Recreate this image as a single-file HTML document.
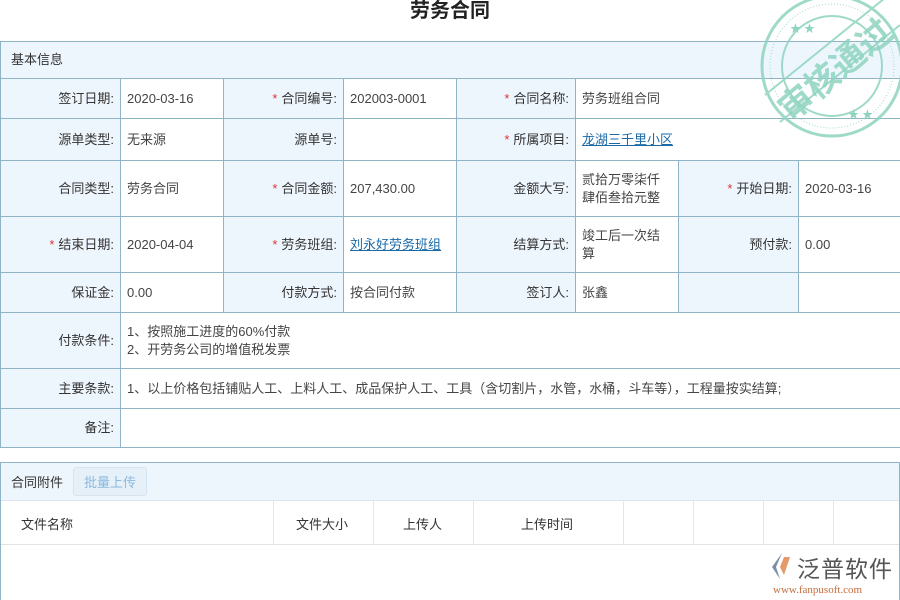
<!DOCTYPE html><html><head><meta charset="utf-8"><style>
*{margin:0;padding:0;box-sizing:border-box}
body{width:900px;height:600px;overflow:hidden;background:#fff;font-family:"Liberation Sans","Noto Sans CJK SC",sans-serif;font-size:13px;color:#333;position:relative}
h1{position:absolute;top:0;left:0;width:900px;text-align:center;font-size:20px;font-weight:bold;line-height:22px;color:#222}
table{border-collapse:collapse;table-layout:fixed;position:absolute;left:0;width:901px}
td{border:1px solid #8fb4c8;padding:0 6px;vertical-align:middle;line-height:18px}
.l{background:#eef6fd;text-align:right;padding-right:6px}
.v{background:#fff;color:#444}
.s{color:#d33;margin-right:4px}
a{color:#1a6aa8;text-decoration:underline}
.hd{background:#eef6fd;padding-left:10px}
</style></head><body>
<h1>劳务合同</h1>
<table style="top:41px">
<colgroup><col style="width:120px"><col style="width:103px"><col style="width:120px"><col style="width:113px"><col style="width:119px"><col style="width:103px"><col style="width:120px"><col style="width:102px"></colgroup>
<tr style="height:37px"><td colspan="8" class="hd">基本信息</td></tr>
<tr style="height:40px"><td class="l">签订日期:</td><td class="v">2020-03-16</td><td class="l"><span class="s">*</span>合同编号:</td><td class="v">202003-0001</td><td class="l"><span class="s">*</span>合同名称:</td><td class="v" colspan="3">劳务班组合同</td></tr>
<tr style="height:42px"><td class="l">源单类型:</td><td class="v">无来源</td><td class="l">源单号:</td><td class="v"></td><td class="l"><span class="s">*</span>所属项目:</td><td class="v" colspan="3"><a>龙湖三千里小区</a></td></tr>
<tr style="height:56px"><td class="l">合同类型:</td><td class="v">劳务合同</td><td class="l"><span class="s">*</span>合同金额:</td><td class="v">207,430.00</td><td class="l">金额大写:</td><td class="v">贰拾万零柒仟肆佰叁拾元整</td><td class="l"><span class="s">*</span>开始日期:</td><td class="v">2020-03-16</td></tr>
<tr style="height:56px"><td class="l"><span class="s">*</span>结束日期:</td><td class="v">2020-04-04</td><td class="l"><span class="s">*</span>劳务班组:</td><td class="v"><a>刘永好劳务班组</a></td><td class="l">结算方式:</td><td class="v">竣工后一次结算</td><td class="l">预付款:</td><td class="v">0.00</td></tr>
<tr style="height:40px"><td class="l">保证金:</td><td class="v">0.00</td><td class="l">付款方式:</td><td class="v">按合同付款</td><td class="l">签订人:</td><td class="v">张鑫</td><td class="l"></td><td class="v"></td></tr>
<tr style="height:56px"><td class="l">付款条件:</td><td class="v" colspan="7">1、按照施工进度的60%付款<br>2、开劳务公司的增值税发票</td></tr>
<tr style="height:40px"><td class="l">主要条款:</td><td class="v" colspan="7">1、以上价格包括铺贴人工、上料人工、成品保护人工、工具（含切割片，水管，水桶，斗车等），工程量按实结算;</td></tr>
<tr style="height:39px"><td class="l">备注:</td><td class="v" colspan="7"></td></tr>
</table>
<div style="position:absolute;top:462px;left:0;width:900px;height:138px;border:1px solid #8fb4c8;border-bottom:none">
<div style="height:38px;background:#eef6fd;border-bottom:1px solid #dde6ee;display:flex;align-items:center;padding-left:10px">合同附件<span style="margin-left:10px;padding:4px 10px;border:1px solid #d6e4f0;border-radius:3px;background:#e6f0f9;color:#8ab9df">批量上传</span></div>
<div style="height:44px;border-bottom:1px solid #e3e3e3;position:relative;color:#333">
<span style="position:absolute;left:20px;top:13px">文件名称</span>
<span style="position:absolute;left:295px;top:13px">文件大小</span>
<span style="position:absolute;left:402px;top:13px">上传人</span>
<span style="position:absolute;left:520px;top:13px">上传时间</span>
<div style="position:absolute;left:272px;top:0;height:44px;border-left:1px solid #e6e6e6"></div>
<div style="position:absolute;left:372px;top:0;height:44px;border-left:1px solid #e6e6e6"></div>
<div style="position:absolute;left:472px;top:0;height:44px;border-left:1px solid #e6e6e6"></div>
<div style="position:absolute;left:622px;top:0;height:44px;border-left:1px solid #e6e6e6"></div>
<div style="position:absolute;left:692px;top:0;height:44px;border-left:1px solid #e6e6e6"></div>
<div style="position:absolute;left:762px;top:0;height:44px;border-left:1px solid #e6e6e6"></div>
<div style="position:absolute;left:832px;top:0;height:44px;border-left:1px solid #e6e6e6"></div>
</div></div>
<div style="position:absolute;left:770px;top:553px;width:22px;height:26px">
<svg width="22" height="26"><polygon points="12,0 2,14 10,26 6,14" fill="#7d8fa8"/><polygon points="14,4 20,4 14,22 10,14" fill="#e59a6a"/></svg></div>
<div style="position:absolute;left:797px;top:550px;font-size:23px;color:#555;letter-spacing:1px">泛普软件</div>
<div style="position:absolute;left:773px;top:584px;font-size:11px;color:#c96b3a;font-family:'Liberation Serif',serif">www.fanpusoft.com</div>
<svg style="position:absolute;left:750px;top:-10px" width="160" height="150" viewBox="0 0 160 150">
<g fill="none" stroke="#8fd4c0" opacity="0.85"><circle cx="82" cy="76" r="70" stroke-width="3"/><circle cx="82" cy="76" r="62" stroke-width="1" stroke-dasharray="1 2"/><circle cx="82" cy="76" r="50" stroke-width="2"/>
<line x1="15" y1="105" x2="135" y2="8" stroke-width="2"/><line x1="30" y1="132" x2="150" y2="35" stroke-width="2"/></g>
<text x="82" y="93" transform="rotate(-40 82 76)" text-anchor="middle" font-size="34" font-weight="bold" fill="#8fd4c0" opacity="0.85" font-family="Noto Sans CJK SC,sans-serif">审核通过</text>
<g fill="#8fd4c0"><text x="40" y="42" font-size="11">★ ★</text><text x="98" y="128" font-size="11">★ ★</text></g>
</svg>
</body></html>
